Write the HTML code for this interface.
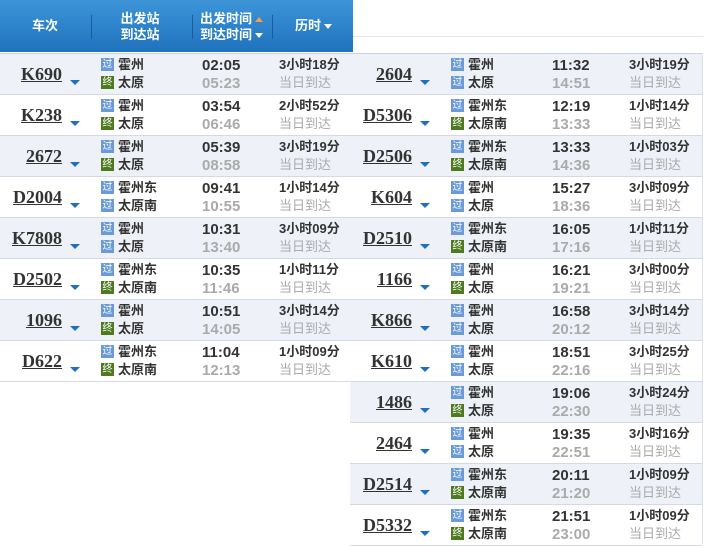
<!DOCTYPE html>
<html><head><meta charset="utf-8"><style>
body{margin:0;width:715px;height:544px;background:#fff;position:relative;overflow:hidden;font-family:"Liberation Sans","Noto Sans CJK SC",sans-serif;}
.hd{position:absolute;left:0;top:0;width:353px;height:52px;background:linear-gradient(#3d95d8,#1f72bd);color:#fff;font-size:13px;font-weight:bold;}
.hd div{position:absolute;text-align:center;line-height:16px;white-space:nowrap;}
.sep{position:absolute;top:15px;width:1px;height:24px;background:#1a5d9c;}
.up{display:inline-block;width:0;height:0;border-left:4px solid transparent;border-right:4px solid transparent;border-bottom:5px solid #f0a050;vertical-align:middle;margin-left:3px}
.dn{display:inline-block;width:0;height:0;border-left:4px solid transparent;border-right:4px solid transparent;border-top:5px solid #fff;vertical-align:middle;margin-left:3px}
.r{position:absolute;width:352px;height:40px;border-bottom:1px solid #d3dae4;}
.r.a{background:#eef1f8}
.r.b{background:#fff}
.n{position:absolute;left:0;width:62px;text-align:right;top:10px;font:bold 18px "Liberation Serif",serif;color:#333;text-decoration:underline;}
.ar{position:absolute;left:70px;top:26px;width:0;height:0;border-left:5px solid transparent;border-right:5px solid transparent;border-top:5px solid #1f6fc0;}
.ic{position:absolute;left:101px;width:13px;height:13px;font-size:10px;line-height:13px;text-align:center;color:#fff;}
.g{background:#6a9ad8}.z{background:#4d7a1f}
.s{position:absolute;left:118px;font-size:13px;font-weight:bold;color:#333;line-height:16px;}
.t{position:absolute;left:202px;font:bold 15px "Liberation Sans",sans-serif;color:#333;}
.t2{color:#aaa}
.d{position:absolute;left:279px;font-size:13px;font-weight:bold;color:#333;line-height:16px;}
.d2{font-weight:normal;color:#aaa}
</style></head><body>
<div class="hd">
<div style="left:20px;top:18px;width:50px">车次</div>
<div class="sep" style="left:91px"></div>
<div style="left:110px;top:11px;width:60px">出发站<br>到达站</div>
<div class="sep" style="left:192px"></div>
<div style="left:200px;top:11px;width:80px;text-align:left">出发时间<span class="up"></span><br>到达时间<span class="dn"></span></div>
<div class="sep" style="left:272px"></div>
<div style="left:295px;top:18px;width:60px;text-align:left">历时<span class="dn"></span></div>
</div>
<div style="position:absolute;left:353px;top:36px;width:350px;height:1px;background:#e3e7ee"></div>
<div style="position:absolute;left:0;top:53px;width:703px;height:1px;background:#c9d3e0"></div>
<div style="position:absolute;left:702px;top:53px;width:1px;height:491px;background:#dde3ea"></div>

<!-- left -->
<div class="r a" style="left:0;top:54px"><div class="n">K690</div><div class="ar"></div><div class="ic g" style="top:4px">过</div><div class="ic z" style="top:22px">终</div><div class="s" style="top:3px">霍州</div><div class="s" style="top:21px">太原</div><div class="t" style="top:3px">02:05</div><div class="t t2" style="top:21px">05:23</div><div class="d" style="top:3px">3小时18分</div><div class="d d2" style="top:21px">当日到达</div></div>
<div class="r b" style="left:0;top:95px"><div class="n">K238</div><div class="ar"></div><div class="ic g" style="top:4px">过</div><div class="ic z" style="top:22px">终</div><div class="s" style="top:3px">霍州</div><div class="s" style="top:21px">太原</div><div class="t" style="top:3px">03:54</div><div class="t t2" style="top:21px">06:46</div><div class="d" style="top:3px">2小时52分</div><div class="d d2" style="top:21px">当日到达</div></div>
<div class="r a" style="left:0;top:136px"><div class="n">2672</div><div class="ar"></div><div class="ic g" style="top:4px">过</div><div class="ic z" style="top:22px">终</div><div class="s" style="top:3px">霍州</div><div class="s" style="top:21px">太原</div><div class="t" style="top:3px">05:39</div><div class="t t2" style="top:21px">08:58</div><div class="d" style="top:3px">3小时19分</div><div class="d d2" style="top:21px">当日到达</div></div>
<div class="r b" style="left:0;top:177px"><div class="n">D2004</div><div class="ar"></div><div class="ic g" style="top:4px">过</div><div class="ic g" style="top:22px">过</div><div class="s" style="top:3px">霍州东</div><div class="s" style="top:21px">太原南</div><div class="t" style="top:3px">09:41</div><div class="t t2" style="top:21px">10:55</div><div class="d" style="top:3px">1小时14分</div><div class="d d2" style="top:21px">当日到达</div></div>
<div class="r a" style="left:0;top:218px"><div class="n">K7808</div><div class="ar"></div><div class="ic g" style="top:4px">过</div><div class="ic g" style="top:22px">过</div><div class="s" style="top:3px">霍州</div><div class="s" style="top:21px">太原</div><div class="t" style="top:3px">10:31</div><div class="t t2" style="top:21px">13:40</div><div class="d" style="top:3px">3小时09分</div><div class="d d2" style="top:21px">当日到达</div></div>
<div class="r b" style="left:0;top:259px"><div class="n">D2502</div><div class="ar"></div><div class="ic g" style="top:4px">过</div><div class="ic z" style="top:22px">终</div><div class="s" style="top:3px">霍州东</div><div class="s" style="top:21px">太原南</div><div class="t" style="top:3px">10:35</div><div class="t t2" style="top:21px">11:46</div><div class="d" style="top:3px">1小时11分</div><div class="d d2" style="top:21px">当日到达</div></div>
<div class="r a" style="left:0;top:300px"><div class="n">1096</div><div class="ar"></div><div class="ic g" style="top:4px">过</div><div class="ic z" style="top:22px">终</div><div class="s" style="top:3px">霍州</div><div class="s" style="top:21px">太原</div><div class="t" style="top:3px">10:51</div><div class="t t2" style="top:21px">14:05</div><div class="d" style="top:3px">3小时14分</div><div class="d d2" style="top:21px">当日到达</div></div>
<div class="r b" style="left:0;top:341px"><div class="n">D622</div><div class="ar"></div><div class="ic g" style="top:4px">过</div><div class="ic z" style="top:22px">终</div><div class="s" style="top:3px">霍州东</div><div class="s" style="top:21px">太原南</div><div class="t" style="top:3px">11:04</div><div class="t t2" style="top:21px">12:13</div><div class="d" style="top:3px">1小时09分</div><div class="d d2" style="top:21px">当日到达</div></div>

<!-- right -->
<div class="r a" style="left:350px;top:54px"><div class="n">2604</div><div class="ar"></div><div class="ic g" style="top:4px">过</div><div class="ic g" style="top:22px">过</div><div class="s" style="top:3px">霍州</div><div class="s" style="top:21px">太原</div><div class="t" style="top:3px">11:32</div><div class="t t2" style="top:21px">14:51</div><div class="d" style="top:3px">3小时19分</div><div class="d d2" style="top:21px">当日到达</div></div>
<div class="r b" style="left:350px;top:95px"><div class="n">D5306</div><div class="ar"></div><div class="ic g" style="top:4px">过</div><div class="ic z" style="top:22px">终</div><div class="s" style="top:3px">霍州东</div><div class="s" style="top:21px">太原南</div><div class="t" style="top:3px">12:19</div><div class="t t2" style="top:21px">13:33</div><div class="d" style="top:3px">1小时14分</div><div class="d d2" style="top:21px">当日到达</div></div>
<div class="r a" style="left:350px;top:136px"><div class="n">D2506</div><div class="ar"></div><div class="ic g" style="top:4px">过</div><div class="ic z" style="top:22px">终</div><div class="s" style="top:3px">霍州东</div><div class="s" style="top:21px">太原南</div><div class="t" style="top:3px">13:33</div><div class="t t2" style="top:21px">14:36</div><div class="d" style="top:3px">1小时03分</div><div class="d d2" style="top:21px">当日到达</div></div>
<div class="r b" style="left:350px;top:177px"><div class="n">K604</div><div class="ar"></div><div class="ic g" style="top:4px">过</div><div class="ic g" style="top:22px">过</div><div class="s" style="top:3px">霍州</div><div class="s" style="top:21px">太原</div><div class="t" style="top:3px">15:27</div><div class="t t2" style="top:21px">18:36</div><div class="d" style="top:3px">3小时09分</div><div class="d d2" style="top:21px">当日到达</div></div>
<div class="r a" style="left:350px;top:218px"><div class="n">D2510</div><div class="ar"></div><div class="ic g" style="top:4px">过</div><div class="ic z" style="top:22px">终</div><div class="s" style="top:3px">霍州东</div><div class="s" style="top:21px">太原南</div><div class="t" style="top:3px">16:05</div><div class="t t2" style="top:21px">17:16</div><div class="d" style="top:3px">1小时11分</div><div class="d d2" style="top:21px">当日到达</div></div>
<div class="r b" style="left:350px;top:259px"><div class="n">1166</div><div class="ar"></div><div class="ic g" style="top:4px">过</div><div class="ic z" style="top:22px">终</div><div class="s" style="top:3px">霍州</div><div class="s" style="top:21px">太原</div><div class="t" style="top:3px">16:21</div><div class="t t2" style="top:21px">19:21</div><div class="d" style="top:3px">3小时00分</div><div class="d d2" style="top:21px">当日到达</div></div>
<div class="r a" style="left:350px;top:300px"><div class="n">K866</div><div class="ar"></div><div class="ic g" style="top:4px">过</div><div class="ic g" style="top:22px">过</div><div class="s" style="top:3px">霍州</div><div class="s" style="top:21px">太原</div><div class="t" style="top:3px">16:58</div><div class="t t2" style="top:21px">20:12</div><div class="d" style="top:3px">3小时14分</div><div class="d d2" style="top:21px">当日到达</div></div>
<div class="r b" style="left:350px;top:341px"><div class="n">K610</div><div class="ar"></div><div class="ic g" style="top:4px">过</div><div class="ic g" style="top:22px">过</div><div class="s" style="top:3px">霍州</div><div class="s" style="top:21px">太原</div><div class="t" style="top:3px">18:51</div><div class="t t2" style="top:21px">22:16</div><div class="d" style="top:3px">3小时25分</div><div class="d d2" style="top:21px">当日到达</div></div>
<div class="r a" style="left:350px;top:382px"><div class="n">1486</div><div class="ar"></div><div class="ic g" style="top:4px">过</div><div class="ic z" style="top:22px">终</div><div class="s" style="top:3px">霍州</div><div class="s" style="top:21px">太原</div><div class="t" style="top:3px">19:06</div><div class="t t2" style="top:21px">22:30</div><div class="d" style="top:3px">3小时24分</div><div class="d d2" style="top:21px">当日到达</div></div>
<div class="r b" style="left:350px;top:423px"><div class="n">2464</div><div class="ar"></div><div class="ic g" style="top:4px">过</div><div class="ic g" style="top:22px">过</div><div class="s" style="top:3px">霍州</div><div class="s" style="top:21px">太原</div><div class="t" style="top:3px">19:35</div><div class="t t2" style="top:21px">22:51</div><div class="d" style="top:3px">3小时16分</div><div class="d d2" style="top:21px">当日到达</div></div>
<div class="r a" style="left:350px;top:464px"><div class="n">D2514</div><div class="ar"></div><div class="ic g" style="top:4px">过</div><div class="ic z" style="top:22px">终</div><div class="s" style="top:3px">霍州东</div><div class="s" style="top:21px">太原南</div><div class="t" style="top:3px">20:11</div><div class="t t2" style="top:21px">21:20</div><div class="d" style="top:3px">1小时09分</div><div class="d d2" style="top:21px">当日到达</div></div>
<div class="r b" style="left:350px;top:505px"><div class="n">D5332</div><div class="ar"></div><div class="ic g" style="top:4px">过</div><div class="ic z" style="top:22px">终</div><div class="s" style="top:3px">霍州东</div><div class="s" style="top:21px">太原南</div><div class="t" style="top:3px">21:51</div><div class="t t2" style="top:21px">23:00</div><div class="d" style="top:3px">1小时09分</div><div class="d d2" style="top:21px">当日到达</div></div>
</body></html>
